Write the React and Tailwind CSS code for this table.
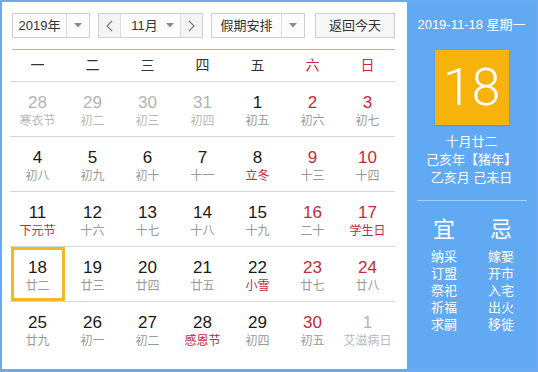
import React from "react";

const F = { fontFamily: '"Liberation Sans", "Noto Sans CJK SC", sans-serif' };

const rows = [
  [["28","寒衣节","o"],["29","初二","o"],["30","初三","o"],["31","初四","o"],["1","初五"],["2","初六","w"],["3","初七","w"]],
  [["4","初八"],["5","初九"],["6","初十"],["7","十一"],["8","立冬","f"],["9","十三","w"],["10","十四","w"]],
  [["11","下元节","f"],["12","十六"],["13","十七"],["14","十八"],["15","十九"],["16","二十","w"],["17","学生日","wf"]],
  [["18","廿二","s"],["19","廿三"],["20","廿四"],["21","廿五"],["22","小雪","f"],["23","廿七","w"],["24","廿八","w"]],
  [["25","廿九"],["26","初一"],["27","初二"],["28","感恩节","f"],["29","初四"],["30","初五","w"],["1","艾滋病日","o"]],
];

function Arrow() {
  return (
    <svg width="8" height="5" viewBox="0 0 8 5"><path d="M0 0h8L4 4.5z" fill="#8a8a8a" /></svg>
  );
}

function Chevron({ dir }) {
  return (
    <svg width="7" height="12" viewBox="0 0 7 12">
      <path d={dir === "l" ? "M6 1L1 6l5 5" : "M1 1l5 5-5 5"} fill="none" stroke="#777" strokeWidth="1.1" />
    </svg>
  );
}

function Cell({ d }) {
  const [n, l, t = ""] = d;
  const out = t.includes("o");
  const numColor = out ? "text-[#b3b3b3]" : t.includes("w") ? "text-[#c8283c]" : "text-[#1a1a1a]";
  const lunColor = out ? "text-[#b8b8b8]" : t.includes("f") ? "text-[#c8283c]" : "text-[#999999]";
  return (
    <div className="relative h-[54px] flex flex-col items-center pt-[11px]">
      {t.includes("s") && (
        <div className="absolute left-px top-0 w-[54px] h-[54px] border-[3px] border-[#f4b826]" />
      )}
      <div className={`text-[17px] leading-[20px] ${numColor}`}>{n}</div>
      <div className={`text-[12px] leading-[16px] ${lunColor}`}>{l}</div>
    </div>
  );
}

export default function App() {
  return (
    <div style={F} className="w-[538px] h-[372px] border-2 border-b-[3px] border-[#6aaaf0] flex bg-white overflow-hidden">
      <div className="w-[405px] pl-[8px] pt-[11px] flex flex-col">
        <div className="flex h-[25px] ml-[2px] text-[13px] text-[#333]">
          <div className="w-[78px] flex border border-[#cfcfcf] bg-[#fcfcfc]">
            <div className="flex-1 flex items-center justify-center">2019年</div>
            <div className="w-[23px] border-l border-[#dcdcdc] flex items-center justify-center"><Arrow /></div>
          </div>
          <div className="w-[105px] ml-[8px] flex border border-[#cfcfcf] bg-[#fcfcfc]">
            <div className="w-[22px] border-r border-[#dcdcdc] bg-[#f4f4f4] flex items-center justify-center"><Chevron dir="l" /></div>
            <div className="flex-1 flex items-center justify-center gap-[8px] pl-[4px]">11月<Arrow /></div>
            <div className="w-[22px] border-l border-[#dcdcdc] bg-[#f4f4f4] flex items-center justify-center"><Chevron dir="r" /></div>
          </div>
          <div className="w-[94px] ml-[8px] flex border border-[#cfcfcf] bg-[#fcfcfc]">
            <div className="flex-1 flex items-center justify-center">假期安排</div>
            <div className="w-[23px] border-l border-[#dcdcdc] flex items-center justify-center"><Arrow /></div>
          </div>
          <div className="w-[80px] ml-[10px] border border-[#cfcfcf] bg-[#f6f6f6] flex items-center justify-center">返回今天</div>
        </div>
        <div className="mt-[11px] ml-[2px] w-[383px] h-px bg-[#92bde8]" />
        <div className="w-[385px] h-[32px] grid grid-cols-7 items-center border-b border-[#d6d6d6] text-[14px] text-[#333]">
          {["一","二","三","四","五","六","日"].map((w, i) => (
            <div key={w} className={`text-center ${i > 4 ? "text-[#c8283c]" : ""}`}>{w}</div>
          ))}
        </div>
        {rows.map((r, i) => (
          <div key={i} className={`w-[385px] grid grid-cols-7 ${i < 4 ? "border-b border-[#d6d6d6]" : ""}`}>
            {r.map((d, j) => <Cell key={j} d={d} />)}
          </div>
        ))}
      </div>
      <div className="flex-1 bg-[#62a9f4] flex flex-col items-center text-white pt-[14px]">
        <div className="text-[13px] leading-[18px]">2019-11-18 星期一</div>
        <div className="mt-[16px] w-[74px] h-[75px] bg-[#f8b20c] flex items-center justify-center shadow-[0_1px_2px_rgba(0,0,0,0.15)]">
          <span className="text-[52px] leading-none font-light" style={{ fontFamily: 'Roboto, "Liberation Sans", sans-serif' }}>18</span>
        </div>
        <div className="mt-[8px] text-[13px] leading-[18px] text-center">
          <div>十月廿二</div>
          <div>己亥年【猪年】</div>
          <div>乙亥月 己未日</div>
        </div>
        <div className="mt-[13px] w-[110px] h-px bg-[#a9cff7]" />
        <div className="self-stretch flex pl-[17px] gap-[17px] mt-[15px]">
          {[["宜",["纳采","订盟","祭祀","祈福","求嗣"]],["忌",["嫁娶","开市","入宅","出火","移徙"]]].map(([h, items]) => (
            <div key={h} className="w-[40px] flex flex-col items-center">
              <div className="text-[22px] leading-[28px]">{h}</div>
              <div className="mt-[4px] text-[13px] leading-[17px] flex flex-col items-center">
                {items.map((x) => <div key={x}>{x}</div>)}
              </div>
            </div>
          ))}
        </div>
      </div>
    </div>
  );
}
